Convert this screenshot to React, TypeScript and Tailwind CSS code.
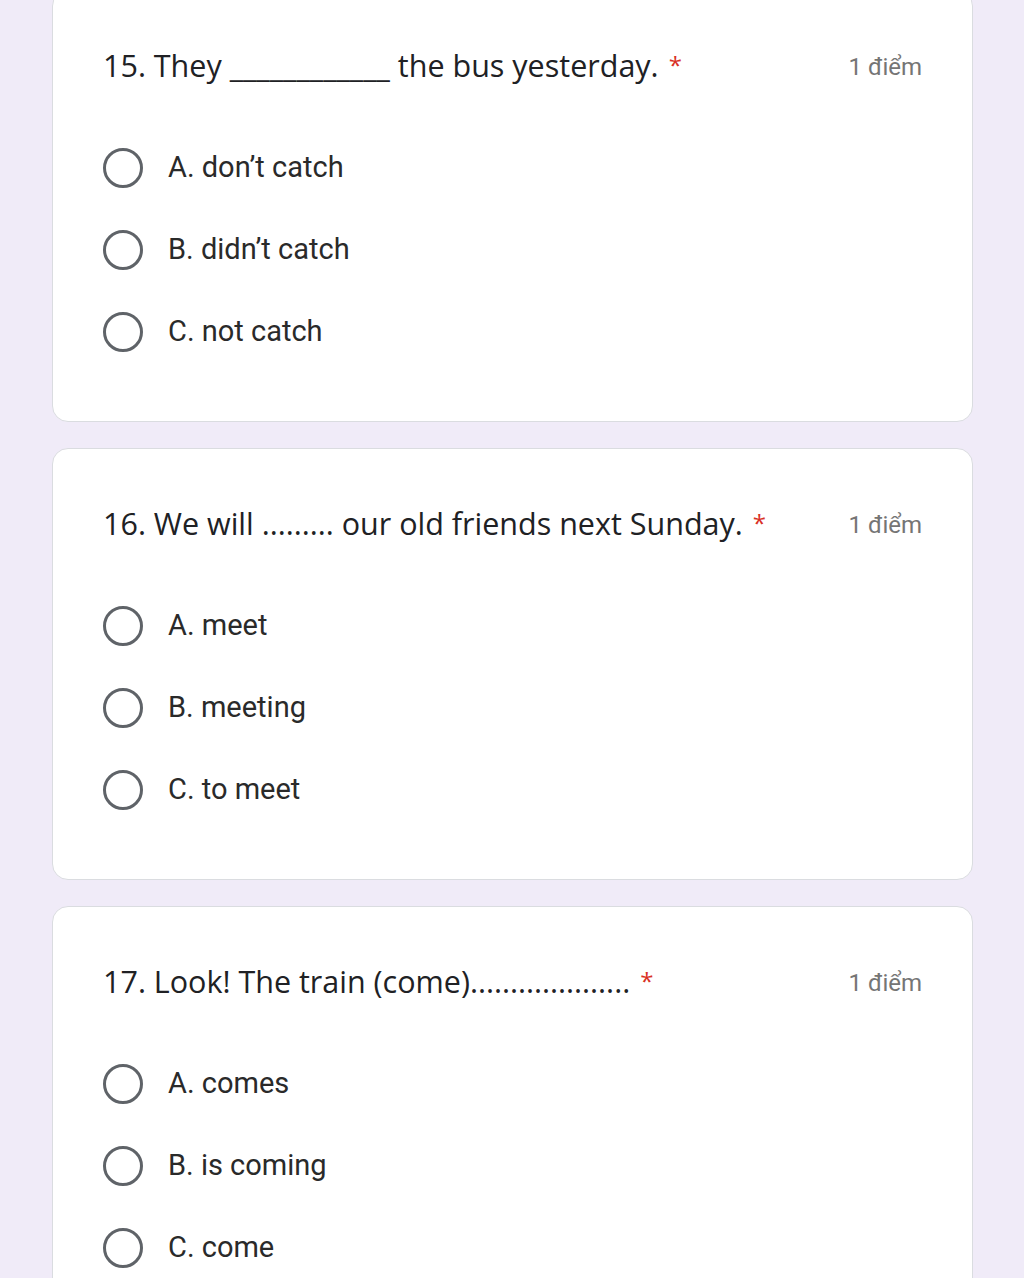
const QUESTIONS = [
  {
    title: '15. They ____________ the bus yesterday.',
    options: ['A. don’t catch', 'B. didn’t catch', 'C. not catch'],
  },
  {
    title: '16. We will ......... our old friends next Sunday.',
    options: ['A. meet', 'B. meeting', 'C. to meet'],
  },
  {
    title: '17. Look! The train (come)....................',
    options: ['A. comes', 'B. is coming', 'C. come'],
  },
];

function Radio() {
  return <span className="block h-[40px] w-[40px] shrink-0 rounded-full border-[3px] border-[#5f6368]" />;
}

function QuestionCard({ title, options }: { title: string; options: string[] }) {
  return (
    <div className="rounded-[16px] border border-[#dadce0] bg-white px-[50px] pb-[48px] pt-[54px]">
      <div className="flex items-center justify-between">
        <div className="font-['Open_Sans',sans-serif] text-[30.5px] leading-[40px] text-[#202124]">
          {title}
          <span className="ml-[10px] align-top text-[24px] text-[#d93025]">*</span>
        </div>
        <div className="pt-[4px] font-['Roboto',sans-serif] text-[24px] text-[#757575]">1 điểm</div>
      </div>
      <div className="mt-[42px] flex flex-col">
        {options.map((o) => (
          <div key={o} className="flex h-[82px] items-center gap-[25px]">
            <Radio />
            <span className="font-['Roboto',sans-serif] text-[29px] text-[#2a2a2a]">{o}</span>
          </div>
        ))}
      </div>
    </div>
  );
}

export default function App() {
  return (
    <div className="min-h-[1278px] overflow-hidden bg-[#f0ebf8]">
      <div className="-mt-[10px] flex flex-col gap-[26px] pl-[52px] pr-[51px]">
        {QUESTIONS.map((q) => (
          <QuestionCard key={q.title} title={q.title} options={q.options} />
        ))}
      </div>
    </div>
  );
}
